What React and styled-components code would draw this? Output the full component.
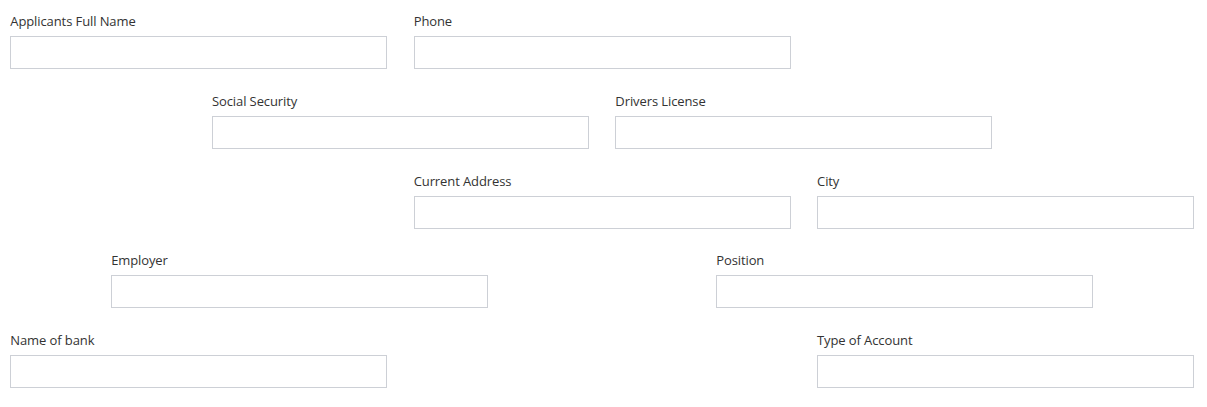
import React from "react";
import styled, { createGlobalStyle } from "styled-components";

const GlobalStyle = createGlobalStyle`
  body {
    margin: 0;
    background: #ffffff;
    font-family: "Open Sans", "Noto Sans", Arial, sans-serif;
  }
`;

const Form = styled.form`
  padding: 11px 0 0 10.3px;
  display: flex;
  flex-direction: column;
  gap: 21.75px;
`;

const Row = styled.div`
  display: grid;
  grid-template-columns: repeat(12, 74.3px);
  column-gap: 26.55px;
`;

const Field = styled.div`
  grid-column: ${(p) => p.$start} / span 4;
  display: flex;
  flex-direction: column;
  gap: 5px;
`;

const Label = styled.label`
  font-size: 13px;
  line-height: 20px;
  color: #333333;
  letter-spacing: -0.1px;
`;

const Input = styled.input`
  box-sizing: border-box;
  width: 100%;
  height: 33px;
  border: 1px solid #cdd0d6;
  border-radius: 0;
  background: #ffffff;
  padding: 0 8px;
  font: inherit;
  font-size: 13px;
  outline: none;
`;

const rows = [
  [
    { label: "Applicants Full Name", start: 1 },
    { label: "Phone", start: 5 },
  ],
  [
    { label: "Social Security", start: 3 },
    { label: "Drivers License", start: 7 },
  ],
  [
    { label: "Current Address", start: 5 },
    { label: "City", start: 9 },
  ],
  [
    { label: "Employer", start: 2 },
    { label: "Position", start: 8 },
  ],
  [
    { label: "Name of bank", start: 1 },
    { label: "Type of Account", start: 9 },
  ],
];

export default function App() {
  return (
    <>
      <GlobalStyle />
      <Form onSubmit={(e) => e.preventDefault()}>
        {rows.map((row, i) => (
          <Row key={i}>
            {row.map((f) => (
              <Field key={f.label} $start={f.start}>
                <Label>{f.label}</Label>
                <Input type="text" />
              </Field>
            ))}
          </Row>
        ))}
      </Form>
    </>
  );
}
